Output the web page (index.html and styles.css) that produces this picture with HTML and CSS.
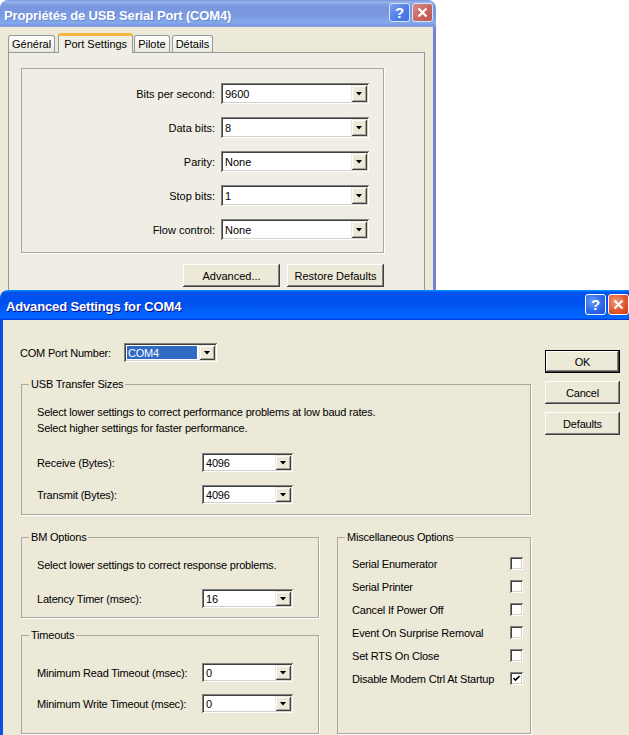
FILE: index.html
```html
<!DOCTYPE html>
<html lang="fr">
<head>
<meta charset="utf-8">
<title>Advanced Settings for COM4</title>
<link rel="stylesheet" href="styles.css">
</head>
<body>
<div class="desktop">

  <section class="window props-window">
    <header class="titlebar inactive">
      <span class="title">Propriétés de USB Serial Port (COM4)</span>
      <div class="caption-buttons">
        <span class="cap-btn help">?</span>
        <span class="cap-btn close"><svg viewBox="0 0 11 11" width="11" height="11"><path d="M1.5 1.5 L9.5 9.5 M9.5 1.5 L1.5 9.5"/></svg></span>
      </div>
    </header>
    <div class="client props-client">
      <nav class="tabs">
        <span class="tab">Général</span>
        <span class="tab selected">Port Settings</span>
        <span class="tab">Pilote</span>
        <span class="tab">Détails</span>
      </nav>
      <div class="tab-panel">
        <div class="frame port-grid">
          <span class="lbl">Bits per second:</span>
          <div class="combo"><span class="value">9600</span><span class="drop"></span></div>
          <span class="lbl">Data bits:</span>
          <div class="combo"><span class="value">8</span><span class="drop"></span></div>
          <span class="lbl">Parity:</span>
          <div class="combo"><span class="value">None</span><span class="drop"></span></div>
          <span class="lbl">Stop bits:</span>
          <div class="combo"><span class="value">1</span><span class="drop"></span></div>
          <span class="lbl">Flow control:</span>
          <div class="combo"><span class="value">None</span><span class="drop"></span></div>
        </div>
        <div class="panel-buttons">
          <button class="btn wide">Advanced...</button>
          <button class="btn wide">Restore Defaults</button>
        </div>
      </div>
    </div>
  </section>

  <section class="window adv-window">
    <header class="titlebar active">
      <span class="title">Advanced Settings for COM4</span>
      <div class="caption-buttons">
        <span class="cap-btn help">?</span>
        <span class="cap-btn close"><svg viewBox="0 0 11 11" width="11" height="11"><path d="M1.5 1.5 L9.5 9.5 M9.5 1.5 L1.5 9.5"/></svg></span>
      </div>
    </header>
    <div class="client adv-client">
      <div class="adv-main">
        <div class="com-row">
          <span class="com-label">COM Port Number:</span>
          <div class="combo small com"><span class="value"><span class="sel">COM4</span></span><span class="drop"></span></div>
        </div>

        <fieldset class="group usb">
          <legend>USB Transfer Sizes</legend>
          <div class="group-body">
            <p class="hint">Select lower settings to correct performance problems at low baud rates.<br>Select higher settings for faster performance.</p>
            <div class="field-grid usb-fields">
              <span>Receive (Bytes):</span>
              <div class="combo small"><span class="value">4096</span><span class="drop"></span></div>
              <span>Transmit (Bytes):</span>
              <div class="combo small"><span class="value">4096</span><span class="drop"></span></div>
            </div>
          </div>
        </fieldset>

        <div class="lower">
          <div class="left-col">
            <fieldset class="group bm">
              <legend>BM Options</legend>
              <div class="group-body">
                <p class="hint">Select lower settings to correct response problems.</p>
                <div class="field-grid bm-fields">
                  <span>Latency Timer (msec):</span>
                  <div class="combo small"><span class="value">16</span><span class="drop"></span></div>
                </div>
              </div>
            </fieldset>
            <fieldset class="group timeouts">
              <legend>Timeouts</legend>
              <div class="group-body">
                <div class="field-grid">
                  <span>Minimum Read Timeout (msec):</span>
                  <div class="combo small"><span class="value">0</span><span class="drop"></span></div>
                  <span>Minimum Write Timeout (msec):</span>
                  <div class="combo small"><span class="value">0</span><span class="drop"></span></div>
                </div>
              </div>
            </fieldset>
          </div>

          <fieldset class="group misc">
            <legend>Miscellaneous Options</legend>
            <ul class="options">
              <li><span>Serial Enumerator</span><span class="check"></span></li>
              <li><span>Serial Printer</span><span class="check"></span></li>
              <li><span>Cancel If Power Off</span><span class="check"></span></li>
              <li><span>Event On Surprise Removal</span><span class="check"></span></li>
              <li><span>Set RTS On Close</span><span class="check"></span></li>
              <li><span>Disable Modem Ctrl At Startup</span><span class="check checked"><svg viewBox="0 0 7 7" width="7" height="7"><path d="M0.5 3 L2.5 5 L6.5 1"/></svg></span></li>
            </ul>
          </fieldset>
        </div>
      </div>

      <div class="adv-buttons">
        <button class="btn default">OK</button>
        <button class="btn">Cancel</button>
        <button class="btn">Defaults</button>
      </div>
    </div>
  </section>

</div>
</body>
</html>
```

FILE: styles.css
```css
* {
  box-sizing: border-box;
  margin: 0;
  padding: 0;
}

html, body {
  width: 629px;
  height: 735px;
  overflow: hidden;
  background: #ffffff;
}

body {
  font-family: "Liberation Sans", Arial, sans-serif;
  font-size: 11px;
  color: #000;
}

.desktop {
  position: relative;
  width: 629px;
  height: 735px;
  overflow: hidden;
}

/* ---------- windows ---------- */
.window {
  position: absolute;
  display: flex;
  flex-direction: column;
}

.props-window {
  left: 0;
  top: 0;
  width: 436px;
  height: 320px;
}

.adv-window {
  left: 0;
  top: 290px;
  width: 637px;
  height: 470px;
}

.titlebar {
  display: flex;
  align-items: center;
  justify-content: space-between;
  border-radius: 8px 8px 0 0;
  color: #fff;
  font-family: "Liberation Sans", Arial, sans-serif;
  font-weight: bold;
  font-size: 13px;
  letter-spacing: -0.15px;
  flex: none;
}

.titlebar.inactive {
  height: 27px;
  padding: 0 3px 0 4px;
  background: linear-gradient(180deg, #7697e7, #7e9ee3 3%, #94afe8 6%, #97b4e9 8%, #82a5e4 14%, #7c9fe2 17%, #7996de 25%, #7b99e1 56%, #82a9e9 81%, #80a5e7 89%, #7b96e1 94%, #7a93df 97%, #abbae3);
}

.titlebar.inactive .title {
  text-shadow: 1px 1px 0 rgba(60, 80, 170, 0.35);
  padding-top: 3px;
}

.titlebar.active {
  height: 30px;
  padding: 0 8px 0 6px;
  background: linear-gradient(180deg, #0997ff, #0053ee 8%, #0050ee 40%, #0066ff 88%, #0066ff 93%, #005bff 95%, #003dd7 96%, #003dd7);
}

.titlebar.active .title {
  text-shadow: 1px 1px 0 #0f1089;
  padding-top: 3px;
}

.caption-buttons {
  display: flex;
  gap: 2px;
}

.cap-btn {
  width: 21px;
  height: 21px;
  border: 1px solid #fff;
  border-radius: 3px;
  display: flex;
  align-items: center;
  justify-content: center;
  color: #fff;
  font-size: 15px;
  font-weight: bold;
  letter-spacing: 0;
}

.cap-btn svg path {
  stroke: #fff;
  stroke-width: 2.2;
  fill: none;
}

.inactive .caption-buttons {
  margin-top: -3px;
}

.inactive .cap-btn {
  height: 19px;
  border-color: #d8e2f8;
}

.inactive .help {
  background: linear-gradient(135deg, #7d9ff0, #4d7de6 60%, #4470dc);
}

.inactive .close {
  background: linear-gradient(135deg, #d88a84, #c8625d 60%, #bd5551);
}

.active .caption-buttons {
  margin-top: -2px;
}

.active .help {
  background: radial-gradient(circle at 35% 35%, #6a9cf8, #2c69ee 55%, #1c50d6);
}

.active .close {
  background: radial-gradient(circle at 35% 35%, #f29a78, #e2582e 55%, #c8381a);
}

.client {
  flex: 1;
  background: #ece9d8;
}

/* ---------- properties window ---------- */
.props-client {
  border-right: 3px solid #7781d8;
  padding: 6px 8px 0 8px;
}

.tabs {
  display: flex;
  align-items: flex-end;
  height: 19px;
  gap: 2px;
  position: relative;
  z-index: 1;
}

.tab {
  height: 17px;
  padding: 0 3px;
  border: 1px solid #919b9c;
  border-bottom: none;
  border-radius: 3px 3px 0 0;
  background: linear-gradient(180deg, #ffffff, #f3f2ec 60%, #e9e7dd);
  display: flex;
  align-items: center;
  line-height: 13px;
}

.tab.selected {
  height: 20px;
  margin-bottom: -1px;
  padding: 0 5px 1px;
  background: #f0eee4;
  border-top: 3px solid #f3b742;
  margin-left: 1px;
  margin-right: -1px;
}

.tab-panel {
  border: 1px solid #919b9c;
  background: #f0eee4;
  padding: 15px 40px 0 12px;
  height: 300px;
}

.frame {
  border: 1px solid #a9a89c;
  box-shadow: 1px 1px 0 #fff;
}

.port-grid {
  display: grid;
  grid-template-columns: 1fr 148px;
  column-gap: 6px;
  row-gap: 13px;
  align-items: center;
  padding: 14px 14px 12px 0;
}

.port-grid .lbl {
  text-align: right;
}

.port-grid .combo {
  height: 21px;
}

.panel-buttons {
  display: flex;
  justify-content: flex-end;
  gap: 7px;
  margin-top: 11px;
}

.btn.wide {
  width: 97px;
}

/* ---------- combos ---------- */
.combo {
  display: flex;
  height: 19px;
  background: #fff;
  padding: 2px;
  box-shadow: inset 1px 1px #808080, inset -1px -1px #ffffff, inset 2px 2px #404040, inset -2px -2px #d4d0c8;
}

.combo .value {
  flex: 1;
  padding-left: 2px;
  display: flex;
  align-items: center;
  white-space: nowrap;
}

.combo .drop {
  width: 16px;
  background: #ece9d8;
  box-shadow: inset 1px 1px #ece9d8, inset -1px -1px #404040, inset 2px 2px #ffffff, inset -2px -2px #a7a49a;
  display: flex;
  align-items: center;
  justify-content: center;
}

.combo .drop::after {
  content: "";
  width: 7px;
  height: 4px;
  background: #000;
  clip-path: polygon(0 0, 100% 0, 50% 100%);
}

.combo.small {
  width: 91px;
}

.combo.com {
  width: 93px;
}

.combo.com .value {
  padding: 1px 2px 1px 1px;
}

.sel {
  flex: 1;
  height: 100%;
  background: #316ac5;
  color: #fff;
  display: flex;
  align-items: center;
  padding-left: 1px;
}

/* ---------- buttons ---------- */
.btn {
  font-family: inherit;
  font-size: 11px;
  letter-spacing: inherit;
  color: #000;
  height: 23px;
  width: 75px;
  border: none;
  background: #ece9d8;
  box-shadow: inset -1px -1px #404040, inset 1px 1px #ffffff, inset -2px -2px #808080, inset 2px 2px #ece9d8;
}

.btn.default {
  border: 1px solid #000;
}

/* ---------- advanced window ---------- */
.adv-client {
  border-left: 3px solid #0c4fe2;
  display: flex;
  padding-left: 18px;
  letter-spacing: -0.2px;
}

.adv-main {
  width: 510px;
  display: flex;
  flex-direction: column;
}

.adv-buttons {
  width: 75px;
  margin-left: 14px;
  margin-top: 30px;
  display: flex;
  flex-direction: column;
  gap: 8px;
}

.com-row {
  display: flex;
  align-items: center;
  margin-top: 23px;
  height: 19px;
}

.com-label {
  width: 104px;
  margin-left: -1px;
}

.group {
  border: 1px solid #a9a89c;
  box-shadow: 1px 1px 0 #fff;
  padding: 0;
  min-width: 0;
}

.group legend {
  margin-left: 7px;
  padding: 0 2px;
  line-height: 13px;
}

.group-body {
  padding: 13px 10px 10px 15px;
}

.hint {
  line-height: 16px;
}

.usb {
  margin-top: 16px;
}

.field-grid {
  display: grid;
  grid-template-columns: 165px 91px;
  row-gap: 13px;
  align-items: center;
}

.usb-fields {
  margin-top: 17px;
}

.lower {
  display: flex;
  gap: 18px;
  margin-top: 16px;
}

.left-col {
  width: 298px;
  display: flex;
  flex-direction: column;
}

.bm-fields {
  margin-top: 16px;
}

.bm .group-body {
  padding-bottom: 9px;
}

.timeouts {
  margin-top: 11px;
}

.timeouts .group-body {
  padding-top: 21px;
  padding-bottom: 20px;
}

.timeouts .field-grid {
  row-gap: 12px;
}

.misc {
  width: 194px;
}

.options {
  list-style: none;
  padding: 8px 7px 0 14px;
}

.options li {
  height: 23px;
  display: flex;
  align-items: center;
  justify-content: space-between;
}

.check {
  width: 13px;
  height: 13px;
  background: #fff;
  box-shadow: inset 1px 1px #808080, inset -1px -1px #ffffff, inset 2px 2px #404040, inset -2px -2px #d4d0c8;
  display: flex;
  align-items: center;
  justify-content: center;
}

.check svg path {
  stroke: #000;
  stroke-width: 1.6;
  fill: none;
}
```
